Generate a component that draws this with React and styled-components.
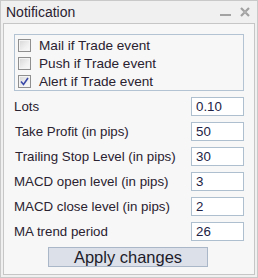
import React, { useState } from "react";
import styled, { createGlobalStyle } from "styled-components";

const GlobalStyle = createGlobalStyle`
  html, body {
    margin: 0;
    padding: 0;
    background: #ffffff;
  }
  body {
    font-family: "Liberation Sans", Arial, sans-serif;
    color: #222222;
  }
`;

const Window = styled.div`
  box-sizing: border-box;
  width: 258px;
  height: 278px;
  border: 1px solid #c9c9c9;
  background: #f0f0f0;
  padding: 0 2px 2px 2px;
  display: flex;
  flex-direction: column;
`;

const TitleBar = styled.div`
  height: 22px;
  display: flex;
  align-items: center;
  padding-left: 3px;
  padding-right: 4px;
`;

const Title = styled.span`
  flex: 1;
  font-size: 14px;
  color: #2a2230;
  line-height: 22px;
`;

const TitleButton = styled.span`
  width: 12px;
  height: 12px;
  display: flex;
  align-items: center;
  justify-content: center;
  margin-left: ${({ gap }) => gap || 0}px;
`;

const Client = styled.div`
  flex: 1;
  border: 1px solid #c6c6c6;
  background: #f7f7f7;
  display: flex;
  flex-direction: column;
  padding: 10px 10px 0 10px;
`;

const GroupBox = styled.div`
  border: 1px solid #b3c3d3;
  padding: 1px 0 0 3px;
  display: flex;
  flex-direction: column;
`;

const CheckRow = styled.label`
  height: 18px;
  display: flex;
  align-items: center;
  gap: 8px;
  font-size: 13.6px;
  color: #2a2230;
  cursor: pointer;
`;

const Box = styled.span`
  box-sizing: border-box;
  width: 13px;
  height: 13px;
  border: 1px solid #8f8f8f;
  background: linear-gradient(135deg, #d6d6d6 0%, #f0f0f0 60%, #fbfbfb 100%);
  box-shadow: inset 0 0 0 1px #f4f4f4;
  display: flex;
  align-items: center;
  justify-content: center;
`;

const Params = styled.div`
  display: flex;
  flex-direction: column;
  margin-top: 6px;
`;

const ParamRow = styled.div`
  height: 25px;
  display: flex;
  align-items: flex-start;
  justify-content: space-between;
`;

const Label = styled.span`
  font-size: 13.3px;
  line-height: 19px;
  color: #2a2230;
  padding-left: ${({ indent }) => indent || 0}px;
`;

const Input = styled.input`
  box-sizing: border-box;
  width: 53px;
  height: 19px;
  border: 1px solid #aebfd0;
  background: #ffffff;
  font-family: "Liberation Sans", Arial, sans-serif;
  font-size: 13.3px;
  color: #222244;
  padding: 0 0 0 4px;
  margin: 0;
  outline: none;
`;

const Button = styled.button`
  box-sizing: border-box;
  align-self: center;
  width: 160px;
  height: 20px;
  margin-right: 2px;
  border: 1px solid #aab7c8;
  background: #dbe0e9;
  font-family: "Liberation Sans", Arial, sans-serif;
  font-size: 16.5px;
  color: #1e1c2a;
  padding: 0;
  line-height: 18px;
  cursor: pointer;
`;

const CheckMark = () => (
  <svg width="9" height="9" viewBox="0 0 9 9">
    <path d="M1 4.5 L3.5 7.5 L8 1" fill="none" stroke="#3b4aa8" strokeWidth="1.6" />
  </svg>
);

const checks = [
  { id: "mail", text: "Mail if Trade event", on: false },
  { id: "push", text: "Push if Trade event", on: false },
  { id: "alert", text: "Alert if Trade event", on: true },
];

const params = [
  { label: "Lots", value: "0.10", indent: 0 },
  { label: "Take Profit (in pips)", value: "50", indent: 1 },
  { label: "Trailing Stop Level (in pips)", value: "30", indent: 1 },
  { label: "MACD open level (in pips)", value: "3", indent: 0 },
  { label: "MACD close level (in pips)", value: "2", indent: 0 },
  { label: "MA trend period", value: "26", indent: 0 },
];

export default function App() {
  const [state, setState] = useState(() =>
    Object.fromEntries(checks.map((c) => [c.id, c.on]))
  );
  const [values, setValues] = useState(() => params.map((p) => p.value));

  return (
    <>
      <GlobalStyle />
      <Window>
        <TitleBar>
          <Title>Notification</Title>
          <TitleButton>
            <svg width="11" height="12" viewBox="0 0 11 12">
              <rect x="0" y="8" width="11" height="2" fill="#a3a3a3" />
            </svg>
          </TitleButton>
          <TitleButton gap={8}>
            <svg width="10" height="10" viewBox="0 0 10 10">
              <path d="M1 1 L9 9 M9 1 L1 9" stroke="#a0a0a0" strokeWidth="2.2" />
              <rect x="3.5" y="3.5" width="3" height="3" fill="#b0b0b0" />
            </svg>
          </TitleButton>
        </TitleBar>
        <Client>
          <GroupBox>
            {checks.map((c) => (
              <CheckRow
                key={c.id}
                onClick={() => setState((s) => ({ ...s, [c.id]: !s[c.id] }))}
              >
                <Box>{state[c.id] ? <CheckMark /> : null}</Box>
                {c.text}
              </CheckRow>
            ))}
          </GroupBox>
          <Params>
            {params.map((p, i) => (
              <ParamRow key={p.label}>
                <Label indent={p.indent}>{p.label}</Label>
                <Input
                  value={values[i]}
                  onChange={(e) =>
                    setValues((v) => v.map((x, j) => (j === i ? e.target.value : x)))
                  }
                />
              </ParamRow>
            ))}
          </Params>
          <Button>Apply changes</Button>
        </Client>
      </Window>
    </>
  );
}
